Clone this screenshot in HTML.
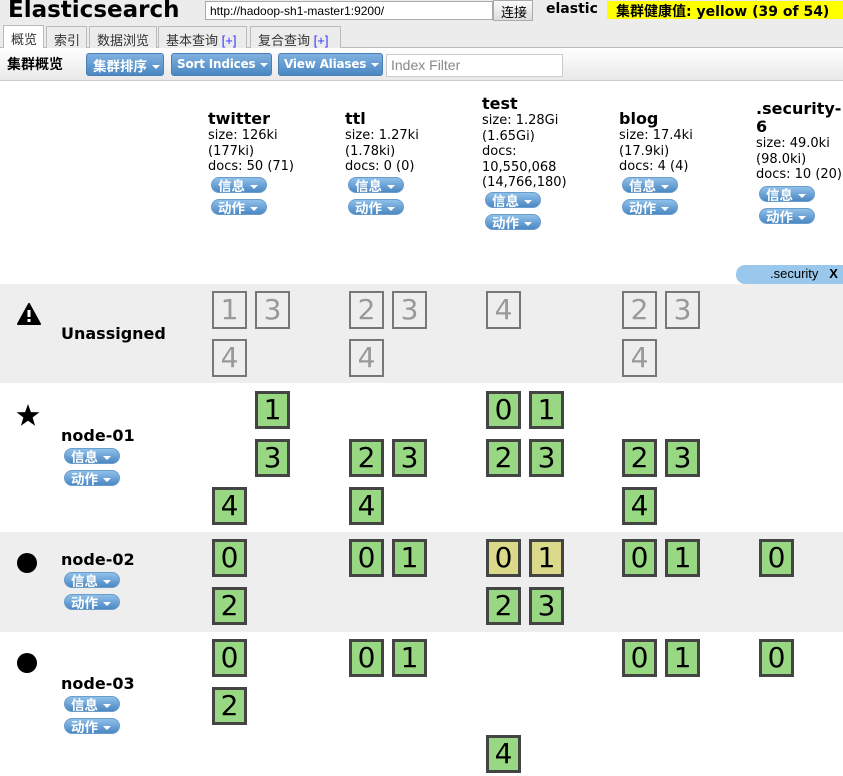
<!DOCTYPE html>
<html><head><meta charset="utf-8"><style>
*{margin:0;padding:0;box-sizing:border-box}
body{width:843px;height:776px;overflow:hidden;position:relative;background:#fff;font-family:"DejaVu Sans","Noto Sans CJK SC",sans-serif;font-size:12px;color:#000}
.a{position:absolute}
.top{left:0;top:0;width:843px;height:47px;background:#ececec}
.tb{left:0;top:47px;width:843px;height:34px;background:linear-gradient(#fff,#e9e9e9);border-top:1px solid #bbb;border-bottom:1px solid #ccc}
.tab{top:26px;height:22px;border:1px solid #bbb;border-bottom:none;background:#ececec;font-size:13px;padding:3px 7px 0;font-family:"Liberation Sans","Noto Sans CJK SC",sans-serif;color:#333;white-space:nowrap}
.tab span{color:#33f;font-family:"Liberation Sans",sans-serif;font-weight:normal}
.btn{top:53px;height:23px;border-radius:3px;background:linear-gradient(#7fb1e0,#4a87c2);border:1px solid #4a7fb5;color:#fff;font-weight:bold;font-size:12px;padding:3px 5px 0;font-family:"DejaVu Sans","Noto Sans CJK SC",sans-serif;white-space:nowrap;overflow:hidden;letter-spacing:-0.2px}
.pill{width:56px;height:16px;border-radius:8px;background:linear-gradient(#8fc0ea,#4c88c3);border:1px solid #6a9ccc;color:#fff;font-weight:bold;font-size:13.5px;line-height:15px;padding-left:6px;overflow:hidden;white-space:nowrap;font-family:"Noto Sans CJK SC",sans-serif}
.car{display:inline-block;width:0;height:0;border-left:4px solid transparent;border-right:4px solid transparent;border-top:4px solid #fff;vertical-align:middle;margin-left:5px}
.idx{font-size:13px;line-height:15.5px;white-space:nowrap}
.idx h3{font-size:16px;font-weight:bold;line-height:18px}
.row{left:0;width:843px}
.s{width:35px;height:38px;border:3px solid #444;background:#99d883;font-family:"DejaVu Sans",sans-serif;font-size:28px;line-height:31px;text-align:center;color:#000}
.u{border:2px solid #777;background:transparent;color:#999;line-height:33px}
.y{background:#dbd98a}
.nn{font-size:16px;font-weight:bold}
</style></head><body>
<div class="a top"></div>
<div class="a" style="left:8px;top:-3px;font-size:23px;font-weight:bold;font-family:'DejaVu Sans',sans-serif">Elasticsearch</div>
<div class="a" style="left:205px;top:1px;width:288px;height:19px;background:#fff;border:1px solid #aaa;font-family:'Liberation Sans',sans-serif;font-size:12px;padding:2px 4px">http://hadoop-sh1-master1:9200/</div>
<div class="a" style="left:493px;top:0px;width:40px;height:21px;background:linear-gradient(#fafafa,#ddd);border:1px solid #aaa;font-size:13px;padding:1px 0 0 7px;font-family:'Liberation Sans','Noto Sans CJK SC',sans-serif">连接</div>
<div class="a" style="left:546px;top:1px;font-size:14px;font-weight:bold">elastic</div>
<div class="a" style="left:607px;top:1px;width:236px;height:18px;background:#ff0;font-size:14px;font-weight:bold;padding-left:9px;white-space:nowrap">集群健康值: yellow (39 of 54)</div>
<div class="a tb"></div>
<div class="a tab" style="left:3px;top:25px;height:23px;background:#fff;width:41px">概览</div>
<div class="a tab" style="left:46px;width:41px">索引</div>
<div class="a tab" style="left:89px;width:68px">数据浏览</div>
<div class="a tab" style="left:158px;width:89px">基本查询 <span>[+]</span></div>
<div class="a tab" style="left:250px;width:91px">复合查询 <span>[+]</span></div>
<div class="a" style="left:7px;top:54px;font-size:14px;font-weight:bold;font-family:'Noto Sans CJK SC',sans-serif">集群概览</div>
<div class="a btn" style="left:86px;width:78px;font-family:'Noto Sans CJK SC',sans-serif;font-size:13.5px;padding:1px 6px 0;letter-spacing:0">集群排序<span class="car"></span></div>
<div class="a btn" style="left:171px;width:101px">Sort Indices<span class="car"></span></div>
<div class="a btn" style="left:278px;width:105px">View Aliases<span class="car"></span></div>
<div class="a" style="left:386px;top:54px;width:177px;height:23px;background:#fff;border:1px solid #ccc;color:#888;font-family:'Liberation Sans',sans-serif;font-size:14px;padding:2px 4px">Index Filter</div>

<div class="a idx" style="left:208px;top:110px"><h3>twitter</h3>size: 126ki<br>(177ki)<br>docs: 50 (71)</div>
<div class="a idx" style="left:345px;top:110px"><h3>ttl</h3>size: 1.27ki<br>(1.78ki)<br>docs: 0 (0)</div>
<div class="a idx" style="left:482px;top:95px"><h3>test</h3>size: 1.28Gi<br>(1.65Gi)<br>docs:<br>10,550,068<br>(14,766,180)</div>
<div class="a idx" style="left:619px;top:110px"><h3>blog</h3>size: 17.4ki<br>(17.9ki)<br>docs: 4 (4)</div>
<div class="a idx" style="left:756px;top:100px"><h3>.security-<br>6</h3>size: 49.0ki<br>(98.0ki)<br>docs: 10 (20)</div>
<div class="a pill" style="left:211px;top:177px">信息<span class="car"></span></div>
<div class="a pill" style="left:211px;top:199px">动作<span class="car"></span></div>
<div class="a pill" style="left:348px;top:177px">信息<span class="car"></span></div>
<div class="a pill" style="left:348px;top:199px">动作<span class="car"></span></div>
<div class="a pill" style="left:485px;top:192px">信息<span class="car"></span></div>
<div class="a pill" style="left:485px;top:214px">动作<span class="car"></span></div>
<div class="a pill" style="left:622px;top:177px">信息<span class="car"></span></div>
<div class="a pill" style="left:622px;top:199px">动作<span class="car"></span></div>
<div class="a pill" style="left:759px;top:186px">信息<span class="car"></span></div>
<div class="a pill" style="left:759px;top:208px">动作<span class="car"></span></div>
<div class="a" style="left:736px;top:265px;width:120px;height:19px;border-radius:9px 0 0 9px;background:#99c8ec;font-family:'Liberation Sans',sans-serif;font-size:13px;padding:1px 0 0 34px;white-space:nowrap">.security &nbsp;&nbsp;<b>X</b></div>

<div class="a row" style="top:284px;height:99px;background:#eee"></div>
<div class="a row" style="top:532px;height:100px;background:#eee"></div>
<svg class="a" style="left:17px;top:303px" width="24" height="22" viewBox="0 0 24 22"><path d="M12 1 L23 21 L1 21 Z" fill="#000" stroke="#000" stroke-linejoin="round" stroke-width="2"/><rect x="10.5" y="7" width="3" height="7" fill="#fff"/><rect x="10.5" y="16" width="3" height="3" fill="#fff"/></svg>
<div class="a nn" style="left:61px;top:324px">Unassigned</div>
<svg class="a" style="left:16px;top:404px" width="24" height="22" viewBox="0 0 24 22"><path d="M12 0 L14.9 8.1 L23.4 8.3 L16.6 13.5 L19.1 21.7 L12 16.8 L4.9 21.7 L7.4 13.5 L0.6 8.3 L9.1 8.1 Z" fill="#000"/></svg>
<div class="a nn" style="left:61px;top:426px">node-01</div>
<div class="a pill" style="left:64px;top:448px">信息<span class="car"></span></div>
<div class="a pill" style="left:64px;top:470px">动作<span class="car"></span></div>
<div class="a" style="left:17px;top:553px;width:20px;height:20px;border-radius:50%;background:#000"></div>
<div class="a nn" style="left:61px;top:550px">node-02</div>
<div class="a pill" style="left:64px;top:572px">信息<span class="car"></span></div>
<div class="a pill" style="left:64px;top:594px">动作<span class="car"></span></div>
<div class="a" style="left:17px;top:653px;width:20px;height:20px;border-radius:50%;background:#000"></div>
<div class="a nn" style="left:61px;top:674px">node-03</div>
<div class="a pill" style="left:64px;top:696px">信息<span class="car"></span></div>
<div class="a pill" style="left:64px;top:718px">动作<span class="car"></span></div>

<div class="a s u" style="left:212px;top:291px">1</div>
<div class="a s u" style="left:255px;top:291px">3</div>
<div class="a s u" style="left:212px;top:339px">4</div>
<div class="a s u" style="left:349px;top:291px">2</div>
<div class="a s u" style="left:392px;top:291px">3</div>
<div class="a s u" style="left:349px;top:339px">4</div>
<div class="a s u" style="left:486px;top:291px">4</div>
<div class="a s u" style="left:622px;top:291px">2</div>
<div class="a s u" style="left:665px;top:291px">3</div>
<div class="a s u" style="left:622px;top:339px">4</div>

<div class="a s" style="left:255px;top:391px">1</div>
<div class="a s" style="left:255px;top:439px">3</div>
<div class="a s" style="left:212px;top:487px">4</div>
<div class="a s" style="left:349px;top:439px">2</div>
<div class="a s" style="left:392px;top:439px">3</div>
<div class="a s" style="left:349px;top:487px">4</div>
<div class="a s" style="left:486px;top:391px">0</div>
<div class="a s" style="left:529px;top:391px">1</div>
<div class="a s" style="left:486px;top:439px">2</div>
<div class="a s" style="left:529px;top:439px">3</div>
<div class="a s" style="left:622px;top:439px">2</div>
<div class="a s" style="left:665px;top:439px">3</div>
<div class="a s" style="left:622px;top:487px">4</div>

<div class="a s" style="left:212px;top:539px">0</div>
<div class="a s" style="left:212px;top:587px">2</div>
<div class="a s" style="left:349px;top:539px">0</div>
<div class="a s" style="left:392px;top:539px">1</div>
<div class="a s y" style="left:486px;top:539px">0</div>
<div class="a s y" style="left:529px;top:539px">1</div>
<div class="a s" style="left:486px;top:587px">2</div>
<div class="a s" style="left:529px;top:587px">3</div>
<div class="a s" style="left:622px;top:539px">0</div>
<div class="a s" style="left:665px;top:539px">1</div>
<div class="a s" style="left:759px;top:539px">0</div>

<div class="a s" style="left:212px;top:639px">0</div>
<div class="a s" style="left:212px;top:687px">2</div>
<div class="a s" style="left:349px;top:639px">0</div>
<div class="a s" style="left:392px;top:639px">1</div>
<div class="a s" style="left:486px;top:735px">4</div>
<div class="a s" style="left:622px;top:639px">0</div>
<div class="a s" style="left:665px;top:639px">1</div>
<div class="a s" style="left:759px;top:639px">0</div>
</body></html>
